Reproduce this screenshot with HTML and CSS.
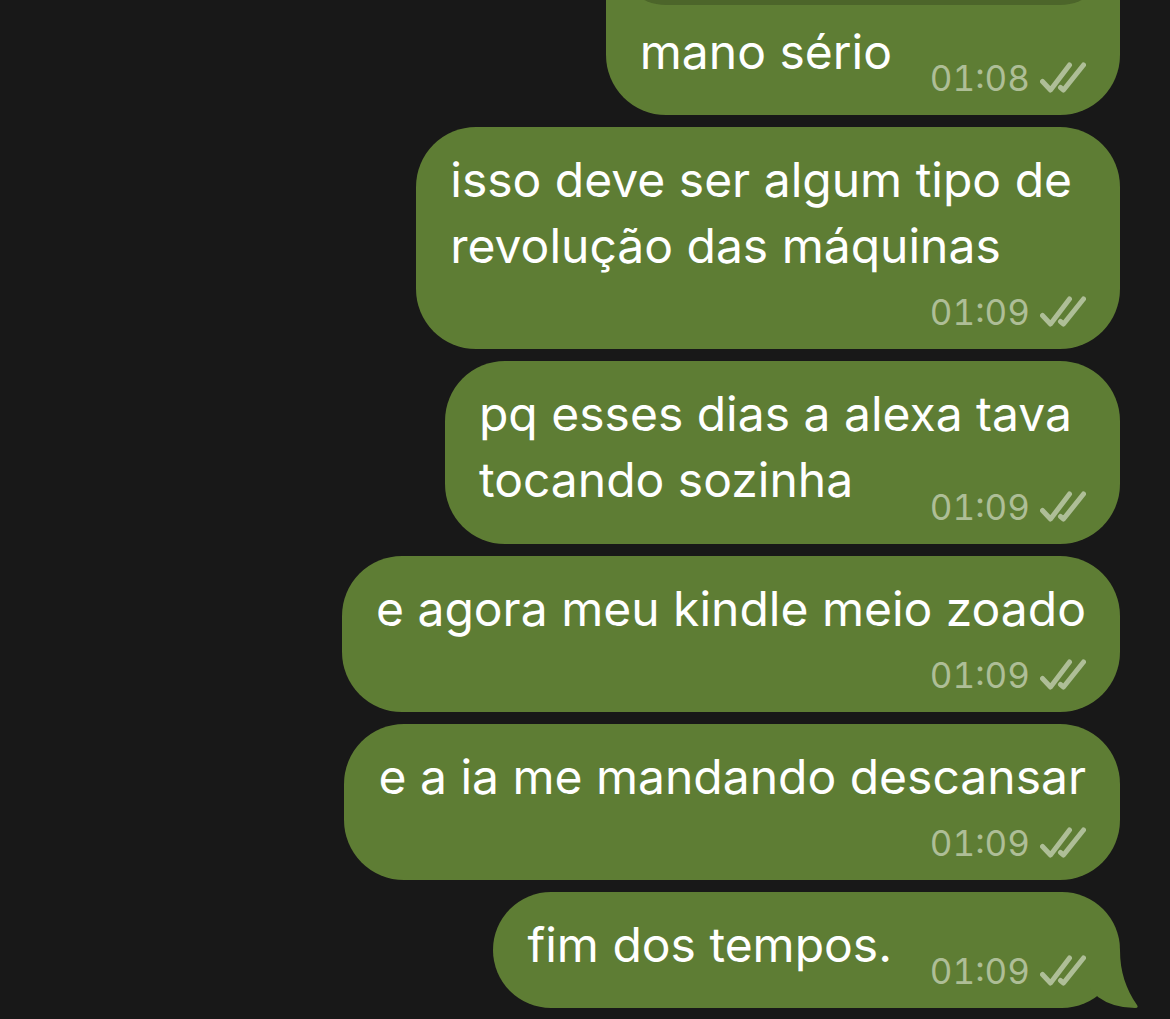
FILE: index.html
```html
<!DOCTYPE html>
<html lang="pt-BR">
<head>
<meta charset="utf-8">
<meta name="viewport" content="width=device-width, initial-scale=1">
<title>Chat</title>
<link rel="stylesheet" href="styles.css">
</head>
<body>
<svg class="defs" aria-hidden="true">
  <symbol id="read" viewBox="0 0 46 32">
    <path d="M2.500 19.500 L10.500 28 L29.500 3 M20.500 25.500 L23.500 28 L43.500 3" fill="none" stroke="currentColor" stroke-width="5" stroke-linecap="round" stroke-linejoin="round"/>
  </symbol>
</svg>
<main class="chat">
  <article class="bubble bubble-inline">
    <div class="attachment"></div>
    <p class="text text-short">mano sério</p>
    <div class="meta"><time>01:08</time><svg class="checks"><use href="#read"/></svg></div>
  </article>
  <article class="bubble">
    <p class="text text-wrapped">isso deve ser algum tipo de<br>revolução das máquinas</p>
    <div class="meta"><time>01:09</time><svg class="checks"><use href="#read"/></svg></div>
  </article>
  <article class="bubble bubble-inline">
    <p class="text text-wrapped">pq esses dias a alexa tava<br>tocando sozinha</p>
    <div class="meta"><time>01:09</time><svg class="checks"><use href="#read"/></svg></div>
  </article>
  <article class="bubble">
    <p class="text">e agora meu kindle meio zoado</p>
    <div class="meta"><time>01:09</time><svg class="checks"><use href="#read"/></svg></div>
  </article>
  <article class="bubble">
    <p class="text">e a ia me mandando descansar</p>
    <div class="meta"><time>01:09</time><svg class="checks"><use href="#read"/></svg></div>
  </article>
  <article class="bubble bubble-inline">
    <p class="text text-short">fim dos tempos.</p>
    <div class="meta"><time>01:09</time><svg class="checks"><use href="#read"/></svg></div>
    <svg class="tail" viewBox="0 0 48 70" aria-hidden="true"><path d="M0 12 H30 C30 34 36 51 47 67 Q49 70 45 70 Q23 70 8 59 L0 50 Z" fill="currentColor"/></svg>
  </article>
</main>
</body>
</html>
```
FILE: styles.css
```css
* { box-sizing: border-box; }

body {
  margin: 0;
  background: #181818;
  color: #fff;
  font-family: Inter, "Liberation Sans", sans-serif;
}

.defs { display: none; }

.chat {
  display: flex;
  flex-direction: column;
  align-items: flex-end;
  justify-content: flex-end;
  gap: 12px;
  height: 100vh;
  padding: 0 50px 11px 50px;
  overflow: hidden;
}

.bubble {
  position: relative;
  display: grid;
  flex: none;
  row-gap: 12px;
  padding: 20px 34px 16px 34px;
  border-radius: 60px;
  background: #5e7d34;
}

.bubble-inline { row-gap: 14px; }

.attachment {
  height: 120px;
  margin: 0 -24px;
  border-radius: 50px;
  background: #4c652a;
}

.text {
  margin: 0;
  font-size: 48px;
  line-height: 66px;
  white-space: nowrap;
}

.text-wrapped { padding-right: 14px; }

.bubble-inline .text,
.bubble-inline .meta { grid-area: 1 / 1; }

.bubble-inline .attachment { grid-area: 1 / 1; }

.bubble-inline .attachment ~ .text,
.bubble-inline .attachment ~ .meta { grid-area: 2 / 1; }

.bubble-inline .text { padding-bottom: 15px; }

.bubble-inline .text-short { padding-bottom: 14px; }

.text-short { padding-right: 194px; }

.meta {
  display: flex;
  align-items: center;
  align-self: end;
  justify-self: end;
  gap: 10px;
  color: #aebe97;
  font-size: 35px;
  font-variant-numeric: tabular-nums;
  line-height: 42px;
}

.checks {
  width: 46px;
  height: 32px;
}

.tail {
  position: absolute;
  right: -18px;
  bottom: 0;
  width: 48px;
  height: 70px;
  color: #5e7d34;
}
```
